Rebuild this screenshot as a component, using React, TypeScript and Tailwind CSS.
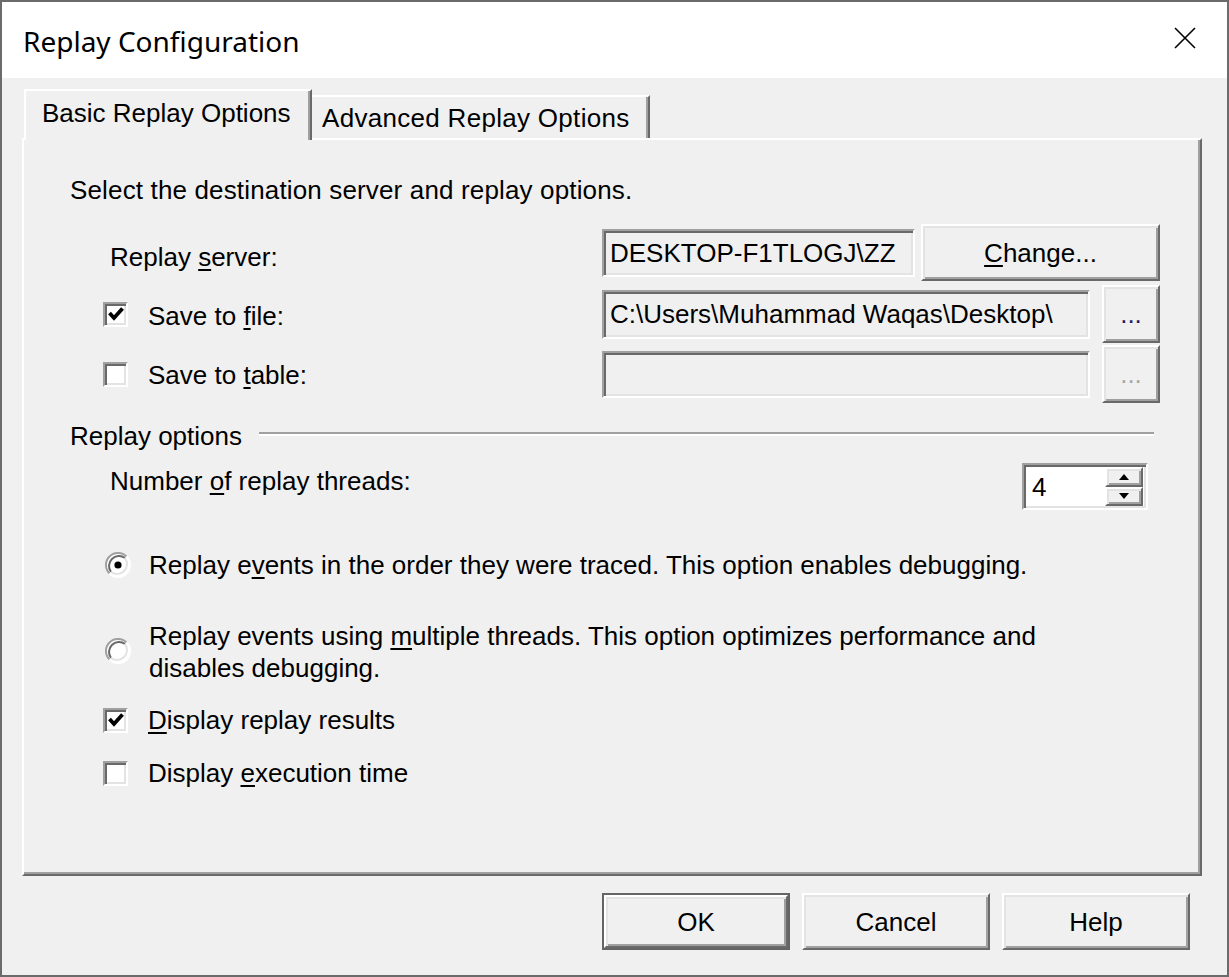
import React from 'react';

const raised =
  'border-2 border-t-white border-l-white border-r-[#696969] border-b-[#696969] shadow-[inset_2px_2px_0_#e3e3e3,inset_-2px_-2px_0_#a0a0a0] bg-[#f0f0f0]';
const sunken =
  'border-2 border-t-[#a0a0a0] border-l-[#a0a0a0] border-r-white border-b-white shadow-[inset_2px_2px_0_#696969,inset_-2px_-2px_0_#e3e3e3]';

function U({ children }: { children: React.ReactNode }) {
  return <span className="underline underline-offset-[3px] decoration-[2px]">{children}</span>;
}

function Checkbox({ checked }: { checked?: boolean }) {
  return (
    <div className={`w-[25px] h-[25px] bg-white flex items-center justify-center ${sunken}`}>
      {checked && (
        <svg width="18" height="18" viewBox="0 0 18 18">
          <path d="M2.5 8 L7 13 L15.5 3.5" fill="none" stroke="#000" strokeWidth="3.8" />
        </svg>
      )}
    </div>
  );
}

function Radio({ checked }: { checked?: boolean }) {
  return (
    <svg width="26" height="26" viewBox="0 0 26 26">
      <circle cx="13" cy="13" r="11.5" fill="#fff" />
      <path d="M4.5 21.5 A12 12 0 0 1 21.5 4.5" fill="none" stroke="#a0a0a0" strokeWidth="2" />
      <path d="M6 20 A10 10 0 0 1 20 6" fill="none" stroke="#696969" strokeWidth="2" />
      <path d="M21.5 4.5 A12 12 0 0 1 4.5 21.5" fill="none" stroke="#ffffff" strokeWidth="2" />
      <path d="M20 6 A10 10 0 0 1 6 20" fill="none" stroke="#e3e3e3" strokeWidth="2" />
      {checked && <circle cx="13" cy="13" r="3.6" fill="#000" />}
    </svg>
  );
}

export default function App() {
  return (
    <div
      className="w-[1229px] h-[977px] border-2 border-[#6b6b6b] flex flex-col bg-[#f0f0f0] text-black overflow-hidden"
      style={{ fontFamily: '"Liberation Sans", Arial, sans-serif' }}
    >
      {/* Title bar */}
      <div className="h-[76px] bg-white flex items-center pl-[21px] pr-[31px] shrink-0">
        <div className="text-[28px] pt-[2px]" style={{ fontFamily: '"Noto Sans", "Open Sans", sans-serif' }}>
          Replay Configuration
        </div>
        <svg className="ml-auto mt-[-4px]" width="22" height="22" viewBox="0 0 22 22">
          <path d="M1 1 L21 21 M21 1 L1 21" stroke="#000" strokeWidth="1.6" />
        </svg>
      </div>

      {/* Body */}
      <div className="flex-1 flex flex-col pl-[20px] pr-[25px] pt-[11px] text-[26px] leading-[32px]">
        {/* Tabs */}
        <div className="flex items-end h-[49px] relative z-10">
          <div className="ml-[2px] h-[51px] -mb-[2px] w-[288px] border-t-2 border-l-2 border-t-white border-l-white border-r-2 border-r-[#696969] shadow-[inset_-2px_0_0_#a0a0a0] bg-[#f0f0f0] pl-[16px] pt-[6px]">
            Basic Replay Options
          </div>
          <div className="h-[43px] w-[338px] border-t-2 border-t-white border-r-2 border-r-[#696969] shadow-[inset_-2px_0_0_#a0a0a0] pl-[10px] pt-[5px] tracking-[0.3px]">
            Advanced Replay Options
          </div>
        </div>

        {/* Panel */}
        <div className="w-[1180px] h-[738px] border-2 border-t-white border-l-white border-r-[#696969] border-b-[#696969] shadow-[inset_-2px_-2px_0_#a0a0a0] pl-[46px] pt-[34px] flex flex-col">
          <div className="h-[32px] tracking-[0.15px]">Select the destination server and replay options.</div>

          {/* Replay server */}
          <div className="flex items-center h-[57px] mt-[18px]">
            <div className="w-[532px] pl-[40px] mt-[9px]">
              Replay <U>s</U>erver:
            </div>
            <div className={`w-[313px] h-[48px] ${sunken} pl-[6px] flex items-center overflow-hidden whitespace-nowrap`}>
              DESKTOP-F1TLOGJ\ZZ
            </div>
            <div className={`ml-[6px] w-[239px] h-[57px] ${raised} flex items-center justify-center`}>
              <span>
                <U>C</U>hange...
              </span>
            </div>
          </div>

          {/* Save to file */}
          <div className="flex items-center h-[58px] mt-[4px]">
            <div className="w-[532px] pl-[33px] flex items-center">
              <Checkbox checked />
              <span className="ml-[20px] mt-[3px]">
                Save to <U>f</U>ile:
              </span>
            </div>
            <div className={`w-[488px] h-[49px] ${sunken} pl-[6px] flex items-center overflow-hidden whitespace-nowrap`}>
              C:\Users\Muhammad Waqas\Desktop\
            </div>
            <div className={`ml-[12px] w-[58px] h-[58px] ${raised} flex items-center justify-center text-[#1c1c60]`}>
              ...
            </div>
          </div>

          {/* Save to table */}
          <div className="flex items-center h-[58px] mt-[2px]">
            <div className="w-[532px] pl-[33px] flex items-center">
              <Checkbox />
              <span className="ml-[20px] mt-[2px]">
                Save to <U>t</U>able:
              </span>
            </div>
            <div className={`w-[488px] h-[47px] ${sunken} bg-[#f0f0f0]`} />
            <div className={`ml-[12px] w-[58px] h-[58px] ${raised} flex items-center justify-center text-[#a8a8a8]`}>
              ...
            </div>
          </div>

          {/* Replay options group */}
          <div className="flex items-center h-[32px] mt-[17px]">
            <span>Replay options</span>
            <div className="flex-1 ml-[17px] mr-[46px] mt-[-4px] border-t-2 border-t-[#a0a0a0] border-b-2 border-b-white" />
          </div>

          <div className="flex items-start h-[47px] mt-[11px]">
            <div className="w-[952px] pl-[40px] mt-[2px]">
              Number <U>o</U>f replay threads:
            </div>
            <div className={`w-[126px] h-[47px] bg-white ${sunken} flex items-center`}>
              <span className="pl-[8px] flex-1">4</span>
              <div className="w-[38px] h-[39px] flex flex-col mr-[3px]">
                <div className={`flex-1 ${raised} flex items-center justify-center`}>
                  <svg width="10" height="6" viewBox="0 0 10 6">
                    <path d="M5 0 L10 6 L0 6 Z" fill="#000" />
                  </svg>
                </div>
                <div className={`flex-1 ${raised} flex items-center justify-center`}>
                  <svg width="10" height="6" viewBox="0 0 10 6">
                    <path d="M0 0 L10 0 L5 6 Z" fill="#000" />
                  </svg>
                </div>
              </div>
            </div>
          </div>

          {/* Radios */}
          <div className="flex items-center h-[32px] mt-[39px] pl-[35px]">
            <Radio checked />
            <span className="ml-[18px]">
              Replay e<U>v</U>ents in the order they were traced. This option enables debugging.
            </span>
          </div>

          <div className="flex items-center h-[64px] mt-[39px] pl-[35px]">
            <div className="mt-[-2px]">
              <Radio />
            </div>
            <span className="ml-[18px]">
              Replay events using <U>m</U>ultiple threads. This option optimizes performance and
              <br />
              disables debugging.
            </span>
          </div>

          <div className="flex items-center h-[32px] mt-[20px] pl-[33px]">
            <Checkbox checked />
            <span className="ml-[20px]">
              <U>D</U>isplay replay results
            </span>
          </div>

          <div className="flex items-center h-[32px] mt-[21px] pl-[33px]">
            <Checkbox />
            <span className="ml-[20px]">
              Display <U>e</U>xecution time
            </span>
          </div>
        </div>

        {/* Dialog buttons */}
        <div className="flex justify-end gap-[12px] mt-[17px] pr-[12px]">
          <div className="w-[188px] h-[57px] border-2 border-[#646464]">
            <div className={`w-full h-full ${raised} flex items-center justify-center`}>OK</div>
          </div>
          <div className={`w-[188px] h-[57px] ${raised} flex items-center justify-center`}>Cancel</div>
          <div className={`w-[188px] h-[57px] ${raised} flex items-center justify-center`}>Help</div>
        </div>
      </div>
    </div>
  );
}
